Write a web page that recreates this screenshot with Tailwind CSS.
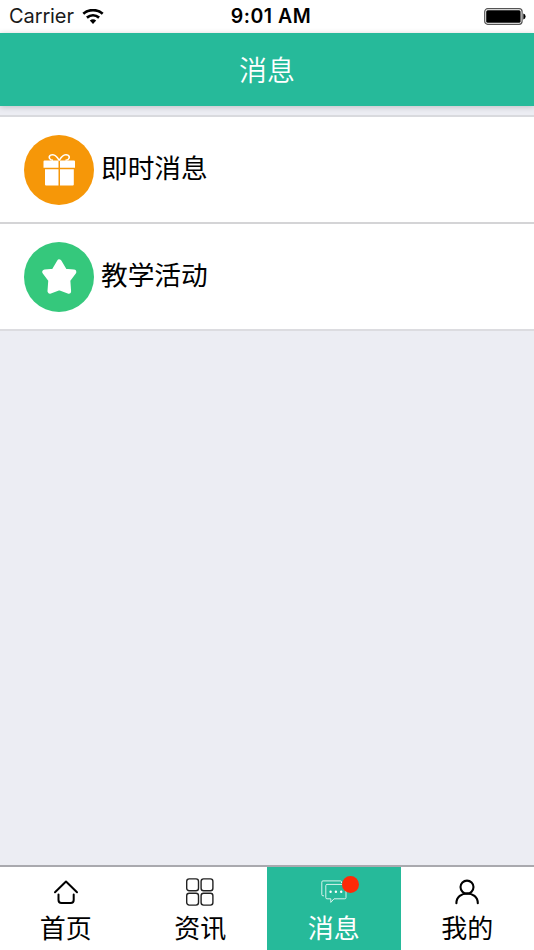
<!DOCTYPE html>
<html lang="zh-CN">
<head>
    <meta charset="UTF-8">
    <meta name="viewport" content="width=device-width, initial-scale=1.0">
    <script src="https://cdn.jsdelivr.net/npm/@tailwindcss/browser@4"></script>
    <title>消息</title>
</head>
<body class="bg-[#ecedf3] font-['Inter','Noto_Sans_CJK_SC',sans-serif] text-black">

    <div class="flex flex-col h-[950px] overflow-hidden">

        <!--STATUS BAR-->
        <div class="relative z-10 grid grid-cols-3 items-center h-[33px] shrink-0 bg-white pl-[9px] pr-[8px]">
            <div class="flex items-center gap-[8px]">
                <span class="text-[20px] leading-[33px] tracking-[-0.1px] text-[#1a1a1a]">Carrier</span>
                <svg class="w-[22px] h-[16px]" viewBox="0 0 22 16" fill="none" stroke="#000" stroke-width="2.7">
                    <path d="M1.3 4.8C6.8-.1 15.2-.1 20.7 4.8" />
                    <path d="M4.9 8.6C8.5 5.6 13.5 5.6 17.1 8.6" />
                    <path d="M7.8 11.6Q11 9.1 14.2 11.6L11 14.9z" fill="#000" stroke="none" />
                </svg>
            </div>
            <span class="pl-[7px] text-center text-[19.5px] leading-[33px] font-semibold tracking-[0.5px] whitespace-nowrap">9:01 AM</span>
            <svg class="justify-self-end w-[42px] h-[17px]" viewBox="0 0 42 17">
                <rect x=".7" y=".7" width="37.4" height="15.6" rx="3" fill="#fff" stroke="#555" stroke-width="1.2" />
                <rect x="2.2" y="2.2" width="34.4" height="12.6" rx="1.5" />
                <path d="M39.3 5.5Q41.6 6.2 41.6 8.5T39.3 11.5z" />
            </svg>
        </div>

        <!--HEADER-->
        <header class="relative z-10 flex justify-center items-center h-[73px] shrink-0 bg-[#26ba9a] shadow-[0_1px_6px_rgba(0,0,0,0.2)]">
            <h1 class="pt-[2px] text-[28px] leading-[40px] font-[350] text-white">消息</h1>
        </header>

        <!--MESSAGE LIST-->
        <main class="flex-1 pt-[9px]">
            <ul class="border-t-2 border-[#d9dade] bg-white">
                <li class="flex items-center gap-[7px] h-[107px] px-6 border-b-2 border-[#d4d4d6]">
                    <svg class="w-[70px] h-[70px]" viewBox="0 0 70 70">
                        <circle cx="35" cy="35" r="35" fill="#f69708" />
                        <path d="M20.5 25.5h14v7.3h-15v-6.3q0-1 1-1zM36 25.5h14q1 0 1 1v6.3H36zM21 34.2h13.5v16.2H22q-1 0-1-1zM36 34.2h13.8v15.2q0 1-1 1H36z" fill="#fff" />
                        <path d="M35.2 25.3C33 21.5 29.5 18.6 26.6 20.2C24.1 21.6 25.2 25 29 25.3M35.2 25.3C37.4 21.5 41 18.6 43.9 20.2C46.4 21.6 45.3 25 41.5 25.3" fill="none" stroke="#fff" stroke-width="1.5" />
                    </svg>
                    <span class="-mt-[4px] text-[26.7px] leading-[40px]">即时消息</span>
                </li>
                <li class="flex items-center gap-[7px] h-[107px] px-6 border-b-2 border-[#dcdce0]">
                    <svg class="w-[70px] h-[70px]" viewBox="0 0 70 70">
                        <circle cx="35" cy="35" r="35" fill="#35c87c" />
                        <path d="M35.3 19.9L40.8 29.3L49.8 30L43.8 38L44.6 49.2L35.3 45.6L26 49.2L26.8 38L20.8 30L29.8 29.3z" fill="#fff" stroke="#fff" stroke-width="5" stroke-linejoin="round" />
                    </svg>
                    <span class="-mt-[4px] text-[26.7px] leading-[40px]">教学活动</span>
                </li>
            </ul>
        </main>

        <!--TAB BAR-->
        <nav class="grid grid-cols-4 h-[85px] shrink-0 border-t-2 border-[#a9a9ae] bg-white text-[26px] leading-[38px]">
            <a class="flex flex-col items-center gap-[3px] pt-[10px] pr-[2px]">
                <svg class="w-[30px] h-[30px]" viewBox="0 0 30 30" fill="none" stroke="#000" stroke-width="2" stroke-linecap="round" stroke-linejoin="round">
                    <path d="M4 15.2L15 4.5L26 15.2M7.5 17.6V23Q7.5 26 10.5 26H19.7Q22.7 26 22.7 23V17.6" />
                </svg>
                <span>首页</span>
            </a>
            <a class="flex flex-col items-center gap-[3px] pt-[10px]">
                <svg class="w-[30px] h-[30px]" viewBox="0 0 30 30" fill="none" stroke="#222" stroke-width="1.4">
                    <rect x="1.7" y="1.9" width="11.8" height="11.8" rx="2.5" />
                    <rect x="16.1" y="1.9" width="11.8" height="11.8" rx="2.5" />
                    <rect x="1.7" y="16.3" width="11.8" height="11.8" rx="2.5" />
                    <rect x="16.1" y="16.3" width="11.8" height="11.8" rx="2.5" />
                </svg>
                <span>资讯</span>
            </a>
            <a class="flex flex-col items-center gap-[3px] pt-[10px] bg-[#26ba9a] text-white">
                <div class="relative">
                    <svg class="w-[30px] h-[30px]" viewBox="0 0 30 30" fill="none" stroke="#d9f4ed" stroke-width="1">
                        <path d="M22.5 6V4.9Q22.5 3.9 21.5 3.9H4Q2.8 3.9 2.8 5.1V17.6Q2.8 18.8 4 18.8H5" />
                        <path d="M8 7.4H25.8Q27 7.4 27 8.6V20.6Q27 21.8 25.8 21.8H15L11.8 25.4V21.8H8Q6.8 21.8 6.8 20.6V8.6Q6.8 7.4 8 7.4z" />
                        <path d="M11.6 14.7h.01M16.9 14.7h.01M22.2 14.7h.01" stroke="#fff" stroke-width="2.4" stroke-linecap="round" />
                    </svg>
                    <span class="absolute -top-[1.5px] left-[23px] size-[17px] rounded-full bg-[#fe2a08]"></span>
                </div>
                <span>消息</span>
            </a>
            <a class="flex flex-col items-center gap-[3px] pt-[10px]">
                <svg class="w-[30px] h-[30px]" viewBox="0 0 30 30" fill="none" stroke="#000" stroke-width="2.1" stroke-linecap="round">
                    <circle cx="15" cy="10.1" r="6.5" />
                    <path d="M4.4 26.3C4.4 13.2 25.8 13.2 25.8 26.3" />
                </svg>
                <span>我的</span>
            </a>
        </nav>
    </div>

</body>
</html>
